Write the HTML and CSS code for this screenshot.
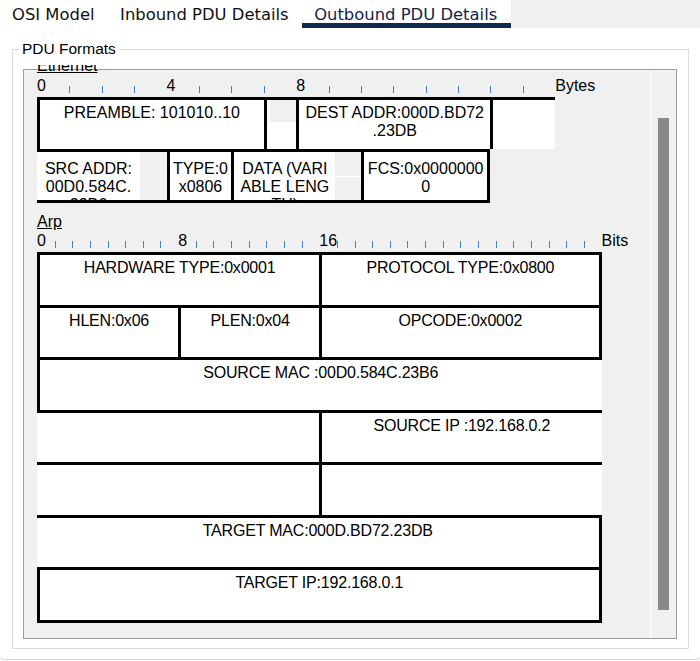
FILE: index.html
```html
<!DOCTYPE html>
<html>
<head>
<meta charset="utf-8">
<link rel="stylesheet" href="styles.css">
</head>
<body>
<div class="tabbar">
  <div class="tabs">
    <div class="tab first">OSI Model</div>
    <div class="tab">Inbound PDU Details</div>
    <div class="tab active">Outbound PDU Details</div>
  </div>
</div>
<div class="panel">
  <fieldset class="group">
    <legend>PDU Formats</legend>
    <div class="pane">
      <div class="viewport">
        <div class="content">
          <div class="label eth-label">Ethernet</div>
          <div class="ruler eth-ruler">
            <span class="rc num">0</span><span class="rc tk"></span><span class="rc tk"></span><span class="rc tk"></span>
            <span class="rc num">4</span><span class="rc tk"></span><span class="rc tk"></span><span class="rc tk"></span>
            <span class="rc num">8</span><span class="rc tk"></span><span class="rc tk"></span><span class="rc tk"></span>
            <span class="rc tk"></span><span class="rc tk"></span><span class="rc tk"></span><span class="rc tk"></span>
            <span class="rc unit">Bytes</span>
          </div>
          <div class="pdu eth">
            <div class="cell s7">PREAMBLE: 101010..10</div>
            <div class="cell s1 sfd"><div class="blk"></div></div>
            <div class="cell s6">DEST ADDR:000D.BD72<br>.23DB</div>
            <div class="cell s2"></div>
            <div class="cell s4 cont part low last"><div class="txt src-txt">SRC ADDR:<br>00D0.584C.<br>23B6</div></div>
            <div class="cell s2 low last">TYPE:0<br>x0806</div>
            <div class="cell s4 part low last"><div class="txt data-txt">DATA (VARI<br>ABLE LENG<br>TH)</div><div class="fill"></div></div>
            <div class="cell s4 end low last">FCS:0x0000000<br>0</div>
          </div>

          <div class="label arp-label">Arp</div>
          <div class="ruler arp-ruler">
            <span class="rc num">0</span><span class="rc tk"></span><span class="rc tk"></span><span class="rc tk"></span><span class="rc tk"></span><span class="rc tk"></span><span class="rc tk"></span><span class="rc tk"></span>
            <span class="rc num">8</span><span class="rc tk"></span><span class="rc tk"></span><span class="rc tk"></span><span class="rc tk"></span><span class="rc tk"></span><span class="rc tk"></span><span class="rc tk"></span>
            <span class="rc num">16</span><span class="rc tk"></span><span class="rc tk"></span><span class="rc tk"></span><span class="rc tk"></span><span class="rc tk"></span><span class="rc tk"></span><span class="rc tk"></span>
            <span class="rc tk"></span><span class="rc tk"></span><span class="rc tk"></span><span class="rc tk"></span><span class="rc tk"></span><span class="rc tk"></span><span class="rc tk"></span><span class="rc tk"></span>
            <span class="rc unit">Bits</span>
          </div>
          <div class="pdu arp">
            <div class="cell b16">HARDWARE TYPE:0x0001</div>
            <div class="cell b16 end">PROTOCOL TYPE:0x0800</div>
            <div class="cell b8">HLEN:0x06</div>
            <div class="cell b8">PLEN:0x04</div>
            <div class="cell b16 end">OPCODE:0x0002</div>
            <div class="cell b32">SOURCE MAC :00D0.584C.23B6</div>
            <div class="cell b16 cont"></div>
            <div class="cell b16">SOURCE IP :192.168.0.2</div>
            <div class="cell b16 cont"></div>
            <div class="cell b16"></div>
            <div class="cell b32 cont end">TARGET MAC:000D.BD72.23DB</div>
            <div class="cell b32 end last">TARGET IP:192.168.0.1</div>
          </div>
        </div>
      </div>
      <div class="vscroll"><div class="thumb"></div></div>
    </div>
  </fieldset>
</div>
</body>
</html>
```
FILE: styles.css
```css
* { box-sizing: border-box; }

html, body {
  margin: 0;
  background: #fff;
}

body {
  width: 700px;
  height: 661px;
  overflow: hidden;
  font-family: "Liberation Sans", Arial, sans-serif;
  color: #000;
}

/* ---------- tabs ---------- */
.tabbar {
  display: flex;
  height: 28px;
  background: #f0f0f0;
}

.tabs {
  display: flex;
  background: #fff;
}

.tab {
  height: 28px;
  padding: 5px 13.5px 0 12px;
  font-family: "DejaVu Sans", sans-serif;
  font-size: 16.4px;
  line-height: 20px;
  white-space: nowrap;
  color: #111;
}

.tab.active {
  color: #13254a;
  border-bottom: 5px solid #0f2a4f;
}

/* ---------- tab page & group box ---------- */
.panel {
  height: 632px;
  margin: 0 -2px;
  padding: 12px 12px 0 13px;
  border: 1px solid #dadada;
  border-top: none;
  border-radius: 0 0 6px 6px;
}

.group {
  margin: 0;
  border: 1px solid #dcdcdc;
  padding: 11px 11px 9px 10px;
  min-width: 0;
}

.group legend {
  margin-left: -4px;
  padding: 0 3px;
  font-size: 15.5px;
  line-height: 18px;
  color: #000;
}

.pane {
  display: flex;
  height: 570px;
  border: 1px solid #9c9c9c;
  background: #f0f0f0;
}

/* the viewport clip starts a few pixels above the pane's inner edge,
   so the partly-scrolled label is drawn over the top border */
.viewport {
  flex: 1;
  margin-top: -5px;
  overflow: hidden;
}

.content {
  margin-top: -8px;
  padding-left: 13px;
}

.vscroll {
  width: 26px;
  border-left: 1px solid #fff;
  padding: 48px 0 0 7px;
}

.thumb {
  width: 11px;
  height: 492px;
  background: #888;
}

/* ---------- labels & rulers ---------- */
.label {
  height: 20px;
  font-size: 16px;
  line-height: 18px;
  text-decoration: underline;
}

.arp-label {
  margin-top: 10px;
  height: 19px;
}

.ruler {
  display: grid;
  height: 20px;
  font-size: 16px;
  line-height: 18px;
}

.eth-ruler { grid-template-columns: repeat(16, 32.4px) auto; }
.arp-ruler { grid-template-columns: repeat(32, 17.65px) auto; }

.rc { white-space: nowrap; }

.tk::before {
  content: "";
  display: block;
  width: 1px;
  height: 7px;
  margin-top: 9px;
  background: #3f84d4;
}

/* ---------- PDU grids ---------- */
.pdu {
  display: grid;
  font-size: 16px;
  line-height: 18.3px;
}

.eth {
  grid-template-columns: repeat(16, 32.4px);
  grid-template-rows: 51.5px 54.5px;
}

.arp {
  grid-template-columns: repeat(32, 17.65px);
  grid-template-rows: repeat(6, 52.5px) 55.5px;
  letter-spacing: -0.2px;
}

.cell {
  background: #fff;
  border-top: 3px solid #000;
  border-left: 3px solid #000;
  padding-top: 4px;
  text-align: center;
  white-space: nowrap;
  overflow: hidden;
}

.cell.cont { border-left: none; }
.cell.end { border-right: 3px solid #000; }
.cell.last { border-bottom: 3px solid #000; }
.cell.low { padding-top: 8px; }

.s1 { grid-column: span 1; }
.s2 { grid-column: span 2; }
.s4 { grid-column: span 4; }
.s6 { grid-column: span 6; }
.s7 { grid-column: span 7; }
.b8 { grid-column: span 8; }
.b16 { grid-column: span 16; }
.b32 { grid-column: span 32; }

.sfd { padding: 0 0 0 3px; }
.sfd .blk {
  height: 22px;
  background: #f0f0f0;
}

.cell.part {
  display: flex;
  padding-top: 0;
  background: #f0f0f0;
  align-items: stretch;
}

.txt {
  background: #fff;
  padding-top: 8px;
  text-align: center;
}

.src-txt { width: 103px; }
.data-txt { width: 101px; }

.fill {
  flex: 1;
  background: linear-gradient(#f0f0f0 0 24px, #fff 24px 25px, #f0f0f0 25px);
}
```
